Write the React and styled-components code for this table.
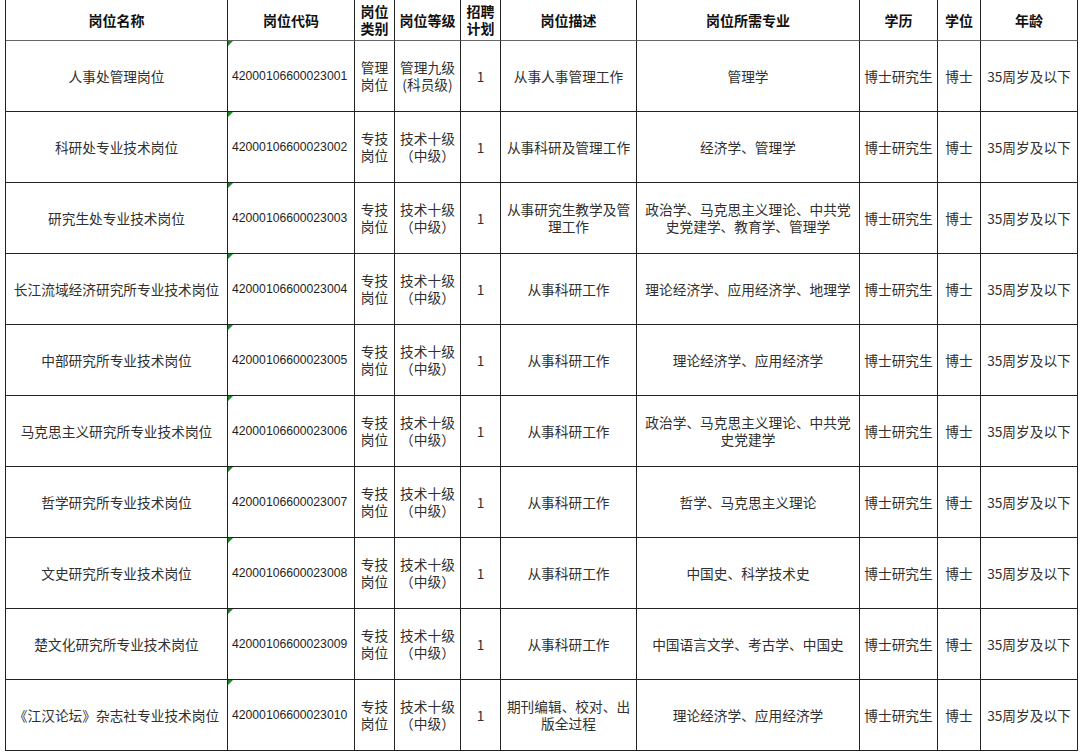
import React from "react";
import styled, { createGlobalStyle } from "styled-components";

const Global = createGlobalStyle`
  html, body { margin: 0; padding: 0; background: #fff; }
  body { font-family: "Noto Sans CJK SC", "Noto Sans", sans-serif; }
`;

const Page = styled.div`
  padding-left: 5px;
  width: 1080px;
  height: 755px;
  box-sizing: border-box;
  overflow: hidden;
  background: #fff;
`;

const Grid = styled.div`
  display: grid;
  grid-template-columns: 222px 127px 40px 66px 40px 136px 223px 78px 43px 97px;
  grid-template-rows: 41px repeat(10, 71px);
  border-left: 1px solid #222;
  width: max-content;
`;

const HeadCell = styled.div`
  box-sizing: border-box;
  border-right: 1px solid #222;
  border-bottom: 1px solid #666;
  display: flex;
  align-items: center;
  justify-content: center;
  text-align: center;
  font-weight: 700;
  font-size: 14px;
  line-height: 17px;
  color: #111;
  padding: 0 2px;
  white-space: pre-line;
`;

const Cell = styled.div`
  position: relative;
  box-sizing: border-box;
  border-right: 1px solid #222;
  border-bottom: 1px solid #222;
  display: flex;
  align-items: center;
  justify-content: ${(p) => (p.$left ? "flex-start" : "center")};
  text-align: ${(p) => (p.$left ? "left" : "center")};
  font-size: 13.7px;
  line-height: 17px;
  color: #303030;
  padding: 0 ${(p) => (p.$left ? "4px" : "3px")};
  white-space: pre-line;
`;

const CodeCell = styled(Cell)`
  font-family: "Liberation Sans", Arial, sans-serif;
  font-size: 12.2px;
  color: #1e1e1e;
  &::before {
    content: "";
    position: absolute;
    left: 0;
    top: 0;
    width: 0;
    height: 0;
    border-top: 5px solid #1c8a2a;
    border-right: 5px solid transparent;
  }
`;

const headers = [
  "岗位名称",
  "岗位代码",
  "岗位\n类别",
  "岗位等级",
  "招聘\n计划",
  "岗位描述",
  "岗位所需专业",
  "学历",
  "学位",
  "年龄",
];

const GRADE = "技术十级\n（中级）";
const rows = [
  ["人事处管理岗位", "42000106600023001", "管理岗位", "管理九级\n(科员级)", "从事人事管理工作", "管理学"],
  ["科研处专业技术岗位", "42000106600023002", "专技岗位", GRADE, "从事科研及管理工作", "经济学、管理学"],
  ["研究生处专业技术岗位", "42000106600023003", "专技岗位", GRADE, "从事研究生教学及管理工作", "政治学、马克思主义理论、中共党史党建学、教育学、管理学"],
  ["长江流域经济研究所专业技术岗位", "42000106600023004", "专技岗位", GRADE, "从事科研工作", "理论经济学、应用经济学、地理学"],
  ["中部研究所专业技术岗位", "42000106600023005", "专技岗位", GRADE, "从事科研工作", "理论经济学、应用经济学"],
  ["马克思主义研究所专业技术岗位", "42000106600023006", "专技岗位", GRADE, "从事科研工作", "政治学、马克思主义理论、中共党史党建学"],
  ["哲学研究所专业技术岗位", "42000106600023007", "专技岗位", GRADE, "从事科研工作", "哲学、马克思主义理论"],
  ["文史研究所专业技术岗位", "42000106600023008", "专技岗位", GRADE, "从事科研工作", "中国史、科学技术史"],
  ["楚文化研究所专业技术岗位", "42000106600023009", "专技岗位", GRADE, "从事科研工作", "中国语言文学、考古学、中国史"],
  ["《江汉论坛》杂志社专业技术岗位", "42000106600023010", "专技岗位", GRADE, "期刊编辑、校对、出版全过程", "理论经济学、应用经济学"],
];

export default function App() {
  return (
    <Page>
      <Global />
      <Grid>
        {headers.map((h) => (
          <HeadCell key={h}>{h}</HeadCell>
        ))}
        {rows.map((r) => (
          <React.Fragment key={r[1]}>
            <Cell>{r[0]}</Cell>
            <CodeCell $left>{r[1]}</CodeCell>
            <Cell>{r[2]}</Cell>
            <Cell>{r[3]}</Cell>
            <Cell>1</Cell>
            <Cell>{r[4]}</Cell>
            <Cell>{r[5]}</Cell>
            <Cell>博士研究生</Cell>
            <Cell>博士</Cell>
            <Cell>35周岁及以下</Cell>
          </React.Fragment>
        ))}
      </Grid>
    </Page>
  );
}
